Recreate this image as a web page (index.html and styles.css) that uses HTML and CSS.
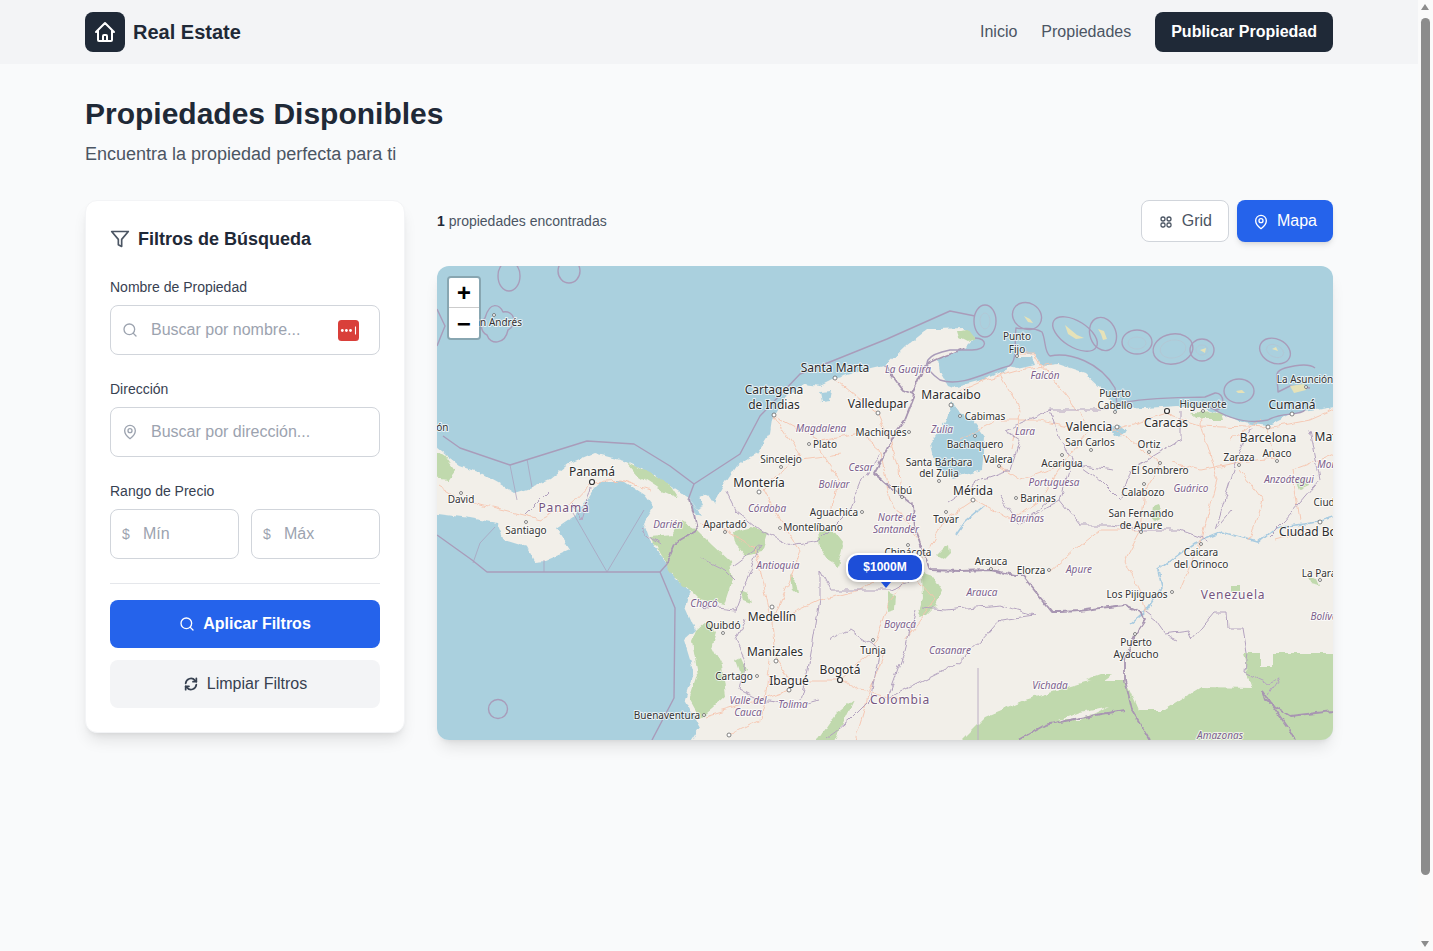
FILE: index.html
```html
<!DOCTYPE html>
<html lang="es">
<head>
<meta charset="utf-8">
<title>Real Estate</title>
<link rel="stylesheet" href="styles.css">
</head>
<body>
<header class="topbar">
  <div class="container topbar-inner">
    <a class="brand" href="#">
      <span class="brand-mark">
        <svg viewBox="0 0 24 24" class="icon-24"><path d="M3 12l2-2m0 0l7-7 7 7M5 10v10a1 1 0 0 0 1 1h3m10-11l2 2m-2-2v10a1 1 0 0 1-1 1h-3m-6 0a1 1 0 0 0 1-1v-4a1 1 0 0 1 1-1h2a1 1 0 0 1 1 1v4a1 1 0 0 0 1 1m-6 0h6"/></svg>
      </span>
      <span class="brand-name">Real Estate</span>
    </a>
    <nav class="nav">
      <a href="#">Inicio</a>
      <a href="#">Propiedades</a>
      <a href="#" class="publish">Publicar Propiedad</a>
    </nav>
  </div>
</header>

<main class="container main">
  <h1>Propiedades Disponibles</h1>
  <p class="lead">Encuentra la propiedad perfecta para ti</p>

  <div class="layout">
    <aside class="filters">
      <h2><svg viewBox="0 0 24 24" class="icon-20"><path d="M22 3H2l8 9.460V19l4 2v-8.540z"/></svg>Filtros de Búsqueda</h2>

      <label class="field-label">Nombre de Propiedad</label>
      <div class="input-wrap">
        <svg viewBox="0 0 24 24" class="input-icon"><circle cx="11" cy="11" r="8"/><path d="m21 21-4.350-4.350"/></svg>
        <input type="text" placeholder="Buscar por nombre...">
        <svg viewBox="0 0 21 21" class="pass-icon"><rect width="21" height="21" rx="3.500" fill="#d93f3a"/><circle cx="4.300" cy="10.500" r="1.400" fill="#fff"/><circle cx="8.400" cy="10.500" r="1.400" fill="#fff"/><circle cx="12.500" cy="10.500" r="1.400" fill="#fff"/><path d="M17.500 6.500v8" stroke="#fff" stroke-width="1.100" fill="none"/></svg>
      </div>

      <label class="field-label">Dirección</label>
      <div class="input-wrap">
        <svg viewBox="0 0 24 24" class="input-icon"><path d="M20 10c0 6-8 12-8 12s-8-6-8-12a8 8 0 0 1 16 0z"/><circle cx="12" cy="10" r="3"/></svg>
        <input type="text" placeholder="Buscar por dirección...">
      </div>

      <label class="field-label">Rango de Precio</label>
      <div class="price-row">
        <div class="input-wrap price"><span class="currency">$</span><input type="text" placeholder="Mín"></div>
        <div class="input-wrap price"><span class="currency">$</span><input type="text" placeholder="Máx"></div>
      </div>

      <div class="actions">
        <button class="btn-apply" type="button"><svg viewBox="0 0 24 24" class="icon-16"><circle cx="11" cy="11" r="8"/><path d="m21 21-4.350-4.350"/></svg>Aplicar Filtros</button>
        <button class="btn-clear" type="button"><svg viewBox="0 0 24 24" class="icon-16 thick"><path d="M4 11a8 8 0 0 1 14-4.500L20 8.500"/><path d="M20 3.500v5h-5"/><path d="M20 13a8 8 0 0 1-14 4.500L4 15.500"/><path d="M4 20.500v-5h5"/></svg>Limpiar Filtros</button>
      </div>
    </aside>

    <section class="results">
      <div class="results-head">
        <p class="count"><strong>1</strong> propiedades encontradas</p>
        <div class="views">
          <button class="view-btn" type="button"><svg viewBox="0 0 16 16" class="icon-grid"><circle cx="5" cy="5" r="2"/><circle cx="11" cy="5" r="2"/><rect x="3" y="9" width="4" height="4" rx="1.400"/><rect x="9" y="9" width="4" height="4" rx="1.400"/></svg>Grid</button>
          <button class="view-btn active" type="button"><svg viewBox="0 0 24 24" class="icon-16 pin"><path d="M20 10c0 6-8 12-8 12s-8-6-8-12a8 8 0 0 1 16 0z"/><circle cx="12" cy="10" r="3"/></svg>Mapa</button>
        </div>
      </div>

      <div class="map">
        <svg class="map-canvas" viewBox="437 266 896 474" width="896" height="474">
          <defs>
            <filter id="wobble" x="-5%" y="-5%" width="110%" height="110%">
              <feTurbulence type="fractalNoise" baseFrequency=".09" numOctaves="2" seed="4"/>
              <feDisplacementMap in="SourceGraphic" scale="7" xChannelSelector="R" yChannelSelector="G"/>
            </filter>
            <filter id="wobble-soft" x="-5%" y="-5%" width="110%" height="110%">
              <feTurbulence type="fractalNoise" baseFrequency=".14" numOctaves="2" seed="9"/>
              <feDisplacementMap in="SourceGraphic" scale="5" xChannelSelector="R" yChannelSelector="G"/>
            </filter>
          </defs>
          <rect class="water" x="437" y="266" width="896" height="474"/>

          <!-- land -->
          <g class="wobble-soft">
          <path class="land" d="M430 442 L447 456 L460 466 L480 473 L500 484 L514 493 L527 489 L550 479 L570 463 L594 453 L624 461 L650 473 L670 486 L690 499 L697 509 L704 506 L700 497 L708 494 L714 503 L722 488 L737 466 L748 458 L757 453 L770 433 L772 420 L774 416 L784 399 L804 384 L820 386 L834 379 L854 373 L885 366 L905 347 L928 329 L940 329 L962 328 L975 338 L965 348 L938 359 L940 372 L948 386 L953 388 L985 379 L1008 369 L1017 359 L1017 354 L1035 354 L1042 366 L1058 364 L1085 373 L1102 389 L1115 409 L1145 408 L1178 406 L1205 409 L1245 423 L1268 426 L1292 414 L1340 406 L1340 750 L685 750 L700 727 L685 700 L694 673 L684 640 L695 630 L685 607 L690 590 L675 578 L667 563 L650 540 L644 523 L654 507 L645 495 L625 482 L600 482 L594 488 L587 500 L575 515 L556 528 L570 550 L545 561 L535 562 L527 547 L504 540 L497 523 L470 518 L430 513 Z"/>
          <path class="water-in" d="M1004 357 h28 l3 8 -18 4 -13 -3z"/>
          <path class="water-in" d="M952 402 L960 413 L972 420 L985 437 L982 470 L952 478 L935 465 L930 443 L945 422 Z"/>
          <path class="water-in" d="M1110 428 l10 -2 6 4 -3 5 -9 1z"/>
          <path class="water-in" d="M820 392 l12 -1 -2 10 -8 1z"/>
          <path class="water-in" d="M690 499 l8 12 4 6 -6 -2 -5 -8z"/>
          </g>

          <!-- forest -->
          <g class="forest">
            <path d="M430 446 L445 456 L455 470 L448 480 L430 478Z"/>
            <path d="M627 462 L650 473 L670 486 L678 498 L660 490 L640 477Z"/>
            <path d="M650 537 L672 535 L680 520 L697 530 L712 545 L730 562 L733 580 L725 605 L700 600 L690 590 L675 578 L660 555Z"/>
            <path d="M697 630 L706 622 L716 632 L712 645 L722 665 L726 695 L712 708 L700 718 L690 700 L698 675 L692 642Z"/>
            <path d="M733 532 L752 527 L768 533 L762 552 L745 556 L736 546Z"/>
            <path d="M818 530 L828 526 L843 545 L838 566 L828 560 L820 548Z"/>
            <path d="M922 574 L935 578 L943 590 L936 606 L926 616 L917 618 L923 598Z"/>
            <path d="M888 592 l8 4 -1 14 -7 2z"/>
            <path d="M952 750 L985 717 L1025 700 L1092 680 L1125 680 L1138 710 L1165 710 L1202 687 L1252 688 L1247 673 L1243 653 L1260 653 L1260 667 L1272 667 L1272 653 L1340 653 L1340 750Z"/>
            <path d="M958 331 L968 329 L975 338 L968 342 L960 338Z"/>
            <path d="M814 745 L835 715 L854 700 L842 725 L832 745Z"/>
            <path d="M1152 505 l6 -2 4 14 -7 4 -4 -8z"/>
            <path d="M735 660 l6 -3 5 12 -6 5z"/>
            <path d="M790 575 l6 6 2 13 -6 -5z"/>
            <path d="M740 590 l8 3 3 10 -8 -3z"/>
            <path d="M1190 412 L1222 413 L1224 420 L1200 420 Z"/>
            <path d="M1296 480 l9 -3 4 9 -9 4z"/>
            <path d="M1232 586 h8 v6 h-8z"/>
            <path d="M1308 577 l9 2 3 7 -9 -2z"/>
            <path d="M1085 680 l16 -6 12 0 -12 8z"/>
            <path d="M936 556 l7 -7 6 -4 1 9 -6 6z"/>
            <path d="M1060 720 l20 -8 30 -6 -30 14z" class="clear"/>
          </g>

          <!-- rivers -->
          <g class="river">
            <path d="M1145 612 L1162 587 L1158 570 L1175 557 L1195 543 L1222 532 L1258 542 L1275 528 L1318 522 L1340 515"/>
            <path d="M1145 612 L1130 625"/>
            <path d="M956 535 L965 522 L985 505"/>
          </g>

          <!-- roads -->
          <g class="road">
            <path d="M834 379 L860 400 L878 413 L892 445 L900 470 L902 496"/>
            <path d="M774 416 L790 440 L800 455 L781 470 L764 490 L780 520 L800 550 L790 580 L772 622"/>
            <path d="M774 416 L820 440 L860 433 L880 450 L890 500 L920 540"/>
            <path d="M951 395 L985 380 L1020 370 L1050 365"/>
            <path d="M1017 354 L1035 354 L1042 366 L1070 400 L1090 430 L1115 430 L1166 414"/>
            <path d="M1166 414 L1200 425 L1268 428 L1310 420 L1333 410"/>
            <path d="M1089 430 L1062 465 L1040 500 L1010 520 L975 500 L945 520 L930 548"/>
            <path d="M1115 430 L1146 452 L1160 465 L1145 490 L1141 530"/>
            <path d="M1268 430 L1275 458 L1240 462 L1200 470 L1172 462"/>
            <path d="M1141 530 L1125 560 L1140 590 L1145 612"/>
            <path d="M1200 420 L1218 480 L1200 543 L1180 590"/>
            <path d="M1050 572 L1075 550 L1100 530 L1141 530"/>
            <path d="M772 622 L775 658 L790 680 L840 680 L872 652 L890 600 L930 550"/>
            <path d="M772 622 L820 600 L860 590 L890 570"/>
            <path d="M840 680 L860 690 L900 700"/>
            <path d="M790 690 L760 700 L705 716"/>
            <path d="M770 660 L765 700 L760 720 L730 735"/>
            <path d="M725 530 L755 548 L772 620"/>
            <path d="M725 530 L700 525"/>
            <path d="M592 482 L570 505 L540 520 L500 510 L461 500 L437 485"/>
            <path d="M592 482 L620 480 L650 490"/>
            <path d="M1230 440 L1262 420"/>
            <path d="M1300 520 L1292 470 L1333 455"/>
            <path d="M1275 540 L1310 530"/>
            <path d="M885 650 L870 690 L855 740"/>
            <path d="M960 440 L1000 420 L1040 420 L1089 430"/>
            <path d="M999 466 L1020 480 L1062 465"/>
            <path d="M900 560 L935 600 L905 640"/>
            <path d="M1000 375 L1020 410 L1012 450"/>
            <path d="M1240 470 L1262 500 L1250 540"/>
            <path d="M820 450 L840 480 L830 515"/>
            <path d="M800 460 L840 455"/>
          </g>

          <!-- state borders -->
          <g class="state">
            <path d="M880 455 L862 480 L850 510 L820 540 L790 545 L760 530 L735 510 L725 490"/>
            <path d="M733 566 L760 545 L735 610 L700 606"/>
            <path d="M745 620 L735 640 L745 660 L740 690 L760 700 L800 705 L820 700"/>
            <path d="M820 570 L820 600 L815 630 L808 670 L800 700"/>
            <path d="M820 570 L830 590 L890 590 L915 580"/>
            <path d="M830 640 L850 630 L880 650 L870 700 L850 720 L825 740"/>
            <path d="M915 610 L905 650 L887 700 L905 690 L955 665 L982 640 L1000 620 L1034 615"/>
            <path d="M922 608 L945 610 L1000 605 L1034 615"/>
            <path d="M948 502 L980 480 L1010 470 L1020 440 L1005 430 L1050 410 L1110 410"/>
            <path d="M1050 410 L1060 440 L1075 465 L1115 470"/>
            <path d="M1060 500 L1072 460 L1100 480 L1120 500 L1130 470 L1180 440 L1180 412"/>
            <path d="M1025 520 L1060 500 L1080 525 L1110 525"/>
            <path d="M1000 495 L1020 525 L1055 495"/>
            <path d="M1110 525 L1141 530 L1180 530 L1208 540"/>
            <path d="M1232 510 L1215 530 L1240 450 L1250 430"/>
            <path d="M1310 430 L1320 480 L1285 520 L1270 535"/>
            <path d="M1145 612 L1155 620 L1165 634 L1188 631 L1192 640 L1215 612 L1227 612 L1228 628 L1243 628 L1247 653 L1245 672 L1268 683 L1280 678 L1268 697"/>
            <path d="M1168 635 L1178 640"/>
            <path d="M735 580 L725 570 L700 558"/>
            <path d="M660 545 L640 530"/>
            <path d="M590 488 L580 520 L572 505"/>
            <path d="M525 515 L540 500 L550 490"/>
          </g>
          <path class="line-straight" d="M978 668 L978 740"/>

          <!-- borders -->
          <g class="border">
            <path d="M690 500 L694 515 L697 530 L680 540 L674 545 L667 562"/>
            <path d="M885 366 L903 390 L915 395 L905 420 L895 433 L885 453 L874 473 L885 483 L900 495 L913 505 L915 530 L925 557 L930 570 L960 571 L990 570 L1015 575 L1022 575 L1052 612 L1060 612 L1080 611 L1100 608 L1125 605 L1140 612 L1145 620 L1135 635 L1125 660 L1125 680 L1132 710 L1150 740"/>
            <path d="M965 348 L938 359 L925 365 L912 393"/>
            <path d="M1018 740 L1045 725 L1090 716 L1125 710"/>
            <path d="M1262 691 L1265 700 L1290 716 L1333 711"/>
            <path d="M1262 691 L1290 730 L1295 740"/>
          </g>

          <!-- maritime -->
          <g class="maritime">
            <path d="M437 309 L445 326 L437 346"/>
            <path d="M443 436 L460 448 L510 465 L587 441 L634 444 L670 466 L694 484 L740 454 L760 416 L800 374 L887 339 L950 311 L975 316"/>
            <path d="M694 484 L688 500"/>
            <path class="thin" d="M510 465 L517 500"/>
            <path class="thin" d="M527 459 L532 487"/>
            <path d="M437 535 L472 560 L487 572 L660 572 L675 608 L674 698 L652 740"/>
            <path d="M660 572 L668 563"/>
            <path class="thin" d="M473 563 L480 543 L495 527"/>
            <path class="thin" d="M544 572 L544 560"/>
            <path class="thin" d="M607 572 L573 513"/>
            <path class="thin" d="M607 572 L644 510"/>
            <path d="M975 338 C988 338 988 350 972 350 L950 350 C930 354 915 362 940 380 C962 388 990 370 1009 366 C1018 362 1014 340 1016 328 C1024 330 1032 326 1042 332 C1046 340 1044 352 1050 356 C1070 352 1100 362 1115 388 L1117 404 C1150 396 1190 398 1205 397 L1215 393 C1225 392 1226 410 1215 410 L1208 406 C1230 420 1250 424 1268 420 C1280 412 1300 416 1305 410"/>
            <path d="M1310 388 L1290 386 L1278 392 C1278 378 1272 372 1285 368 C1300 364 1310 364 1315 368"/>
            <ellipse cx="985" cy="321" rx="11" ry="16"/>
            <ellipse cx="1027" cy="316" rx="15" ry="13" transform="rotate(30 1027 316)"/>
            <ellipse cx="1075" cy="334" rx="25" ry="13" transform="rotate(32 1075 334)"/>
            <ellipse cx="1103" cy="334" rx="13" ry="17" transform="rotate(-20 1103 334)"/>
            <ellipse cx="1137" cy="342" rx="15" ry="12"/>
            <ellipse cx="1173" cy="349" rx="20" ry="15" transform="rotate(-10 1173 349)"/>
            <ellipse cx="1202" cy="350" rx="12" ry="11"/>
            <ellipse cx="1275" cy="351" rx="16" ry="12" transform="rotate(25 1275 351)"/>
            <ellipse cx="1239" cy="391" rx="15" ry="12"/>
            <ellipse cx="509" cy="276" rx="11" ry="15"/>
            <ellipse cx="569" cy="271" rx="11" ry="12"/>
            <path d="M485 318 C490 300 500 305 503 312 C515 310 518 325 508 330 C505 345 490 345 487 335 C480 332 480 322 485 318Z"/>
            <circle cx="498" cy="709" r="9.500"/>
          </g>
          <g class="reef">
            <ellipse cx="985" cy="321" rx="5" ry="8"/>
            <ellipse cx="1137" cy="343" rx="9" ry="6"/>
            <ellipse cx="1173" cy="349" rx="13" ry="9" transform="rotate(-10 1173 349)"/>
            <ellipse cx="1202" cy="350" rx="6" ry="5"/>
            <ellipse cx="1275" cy="351" rx="9" ry="6" transform="rotate(25 1275 351)"/>
          </g>

          <!-- islands -->
          <g class="island">
            <path d="M1024 316 l6 3 3 4 -5 -1z"/>
            <path d="M1065 325 l6 5 6 5 7 3 -8 1 -8 -5z"/>
            <path d="M1098 329 l6 2 3 8 -4 1 -2 -6z"/>
            <path d="M1200 350 l6 -2 -1 5z"/>
            <path d="M1236 391 l6 -1 3 3 -7 0z"/>
            <path d="M1272 349 l4 -2 2 4z"/>
            <path d="M1290 386 l14 -2 2 6 -12 3z"/>
          </g>

          <!-- country -->
          <g class="lbl-country">
            <text x="564" y="512">Panamá</text>
            <text x="900" y="704">Colombia</text>
            <text x="1233" y="599">Venezuela</text>
          </g>

          <!-- states -->
          <g class="lbl-state">
            <text x="908" y="373">La Guajira</text><text x="1045" y="379">Falcón</text>
            <text x="821" y="432">Magdalena</text><text x="942" y="433">Zulia</text>
            <text x="1025" y="435">Lara</text><text x="861" y="471">Cesar</text>
            <text x="834" y="488">Bolívar</text><text x="1054" y="486">Portuguesa</text>
            <text x="1191" y="492">Guárico</text><text x="1289" y="483">Anzoátegui</text>
            <text x="1338" y="468">Monagas</text><text x="767" y="512">Córdoba</text>
            <text x="668" y="528">Darién</text><text x="897" y="521">Norte de</text>
            <text x="896" y="533">Santander</text><text x="778" y="569">Antioquia</text>
            <text x="704" y="607">Chocó</text><text x="900" y="628">Boyacá</text>
            <text x="950" y="654">Casanare</text><text x="982" y="596">Arauca</text>
            <text x="1079" y="573">Apure</text><text x="1027" y="522">Barinas</text>
            <text x="1050" y="689">Vichada</text><text x="1220" y="739">Amazonas</text>
            <text x="748" y="704">Valle del</text><text x="748" y="716">Cauca</text>
            <text x="793" y="708">Tolima</text><text x="1326" y="620">Bolívar</text>
          </g>

          <!-- small cities -->
          <g class="lbl-small">
            <text x="469" y="326" class="start">San Andrés</text>
            <text x="437" y="431">León</text><text x="461" y="503">David</text>
            <text x="526" y="534">Santiago</text><text x="825" y="448">Plato</text>
            <text x="881" y="436">Machiques</text><text x="985" y="420">Cabimas</text>
            <text x="975" y="448">Bachaquero</text><text x="939" y="466">Santa Bárbara</text>
            <text x="939" y="477">del Zulia</text><text x="998" y="463">Valera</text>
            <text x="902" y="494">Tibú</text><text x="781" y="463">Sincelejo</text>
            <text x="1017" y="340">Punto</text><text x="1017" y="353">Fijo</text>
            <text x="1115" y="397">Puerto</text><text x="1115" y="409">Cabello</text>
            <text x="1203" y="408">Higuerote</text><text x="1305" y="383">La Asunción</text>
            <text x="1090" y="446">San Carlos</text><text x="1149" y="448">Ortiz</text>
            <text x="1062" y="467">Acarigua</text><text x="1160" y="474">El Sombrero</text>
            <text x="1143" y="496">Calabozo</text><text x="1239" y="461">Zaraza</text>
            <text x="1277" y="457">Anaco</text><text x="1038" y="502">Barinas</text>
            <text x="946" y="523">Tovar</text><text x="725" y="528">Apartadó</text>
            <text x="813" y="531">Montelíbano</text><text x="834" y="516">Aguachica</text>
            <text x="723" y="629">Quibdó</text><text x="734" y="680">Cartago</text>
            <text x="667" y="719">Buenaventura</text><text x="873" y="654">Tunja</text>
            <text x="991" y="565">Arauca</text><text x="1031" y="574">Elorza</text>
            <text x="1141" y="517">San Fernando</text><text x="1141" y="529">de Apure</text>
            <text x="1201" y="556">Caicara</text><text x="1201" y="568">del Orinoco</text>
            <text x="1137" y="598">Los Pijiguaos</text><text x="1136" y="646">Puerto</text>
            <text x="1136" y="658">Ayacucho</text><text x="1328" y="577">La Paragua</text>
            <text x="908" y="556">Chinácota</text><text x="1330" y="506">Ciudad</text>
          </g>

          <!-- large cities -->
          <g class="lbl-large">
            <text x="835" y="372">Santa Marta</text><text x="774" y="394">Cartagena</text>
            <text x="774" y="409">de Indias</text><text x="878" y="408">Valledupar</text>
            <text x="951" y="399">Maracaibo</text><text x="759" y="487">Montería</text>
            <text x="592" y="476">Panamá</text><text x="772" y="621">Medellín</text>
            <text x="775" y="656">Manizales</text><text x="789" y="685">Ibagué</text>
            <text x="840" y="674">Bogotá</text><text x="973" y="495">Mérida</text>
            <text x="1089" y="431">Valencia</text><text x="1166" y="427">Caracas</text>
            <text x="1268" y="442">Barcelona</text><text x="1292" y="409">Cumaná</text>
            <text x="1279" y="536" class="start">Ciudad Bolívar</text><text x="1337" y="441">Maturín</text>
          </g>

          <!-- city dots -->
          <g class="dot">
            <circle cx="494" cy="315" r="1.500"/><circle cx="461" cy="493" r="1.500"/>
            <circle cx="526" cy="522" r="1.500"/><circle cx="809" cy="444" r="1.500"/>
            <circle cx="835" cy="378" r="2"/><circle cx="774" cy="415" r="2"/>
            <circle cx="878" cy="413" r="2"/><circle cx="951" cy="405" r="2"/>
            <circle cx="909" cy="432" r="1.500"/><circle cx="960" cy="416" r="1.500"/>
            <circle cx="975" cy="436" r="1.500"/><circle cx="939" cy="481" r="1.500"/>
            <circle cx="999" cy="466" r="1.500"/><circle cx="902" cy="497" r="1.500"/>
            <circle cx="781" cy="467" r="1.500"/><circle cx="759" cy="492" r="2"/>
            <circle cx="1017" cy="356" r="1.500"/><circle cx="1115" cy="412" r="1.500"/>
            <circle cx="1203" cy="411" r="1.500"/><circle cx="1306" cy="387" r="1.500"/>
            <circle cx="1117" cy="427" r="2"/><circle cx="1091" cy="450" r="1.500"/>
            <circle cx="1149" cy="452" r="1.500"/><circle cx="1062" cy="455" r="1.500"/>
            <circle cx="1160" cy="463" r="1.500"/><circle cx="1144" cy="484" r="1.500"/>
            <circle cx="1239" cy="465" r="1.500"/><circle cx="1277" cy="461" r="1.500"/>
            <circle cx="1016" cy="498" r="1.500"/><circle cx="973" cy="500" r="2"/>
            <circle cx="946" cy="512" r="1.500"/><circle cx="725" cy="532" r="1.500"/>
            <circle cx="780" cy="528" r="1.500"/><circle cx="862" cy="512" r="1.500"/>
            <circle cx="723" cy="633" r="1.500"/><circle cx="757" cy="676" r="1.500"/>
            <circle cx="704" cy="715" r="1.500"/><circle cx="873" cy="640" r="1.500"/>
            <circle cx="991" cy="569" r="1.500"/><circle cx="1049" cy="570" r="1.500"/>
            <circle cx="1141" cy="532" r="1.500"/><circle cx="1201" cy="544" r="1.500"/>
            <circle cx="1172" cy="592" r="1.500"/><circle cx="1135" cy="634" r="1.500"/>
            <circle cx="1320" cy="580" r="1.500"/><circle cx="908" cy="545" r="1.500"/>
            <circle cx="772" cy="607" r="2"/><circle cx="776" cy="661" r="2"/>
            <circle cx="789" cy="690" r="2"/><circle cx="729" cy="735" r="2"/>
            <circle cx="1268" cy="427" r="2"/><circle cx="1292" cy="414" r="2"/>
            <circle cx="1320" cy="522" r="2"/>
          </g>
          <g class="capital">
            <circle cx="592" cy="482" r="2.500"/><circle cx="840" cy="680" r="2.500"/><circle cx="1167" cy="411" r="2.500"/>
          </g>
        </svg>

        <div class="zoom-ctrl">
          <button type="button">+</button>
          <button type="button">−</button>
        </div>

        <div class="price-pin">$1000M</div>
      </div>
    </section>
  </div>
</main>

<div class="fake-scrollbar" aria-hidden="true">
  <span class="sb-up"></span>
  <span class="sb-thumb"></span>
  <span class="sb-down"></span>
</div>
</body>
</html>
```

FILE: styles.css
```css
* { box-sizing: border-box; }
body {
  margin: 0;
  min-height: 1017px;
  padding-right: 15px;
  background: #f9fafb;
  color: #1f2937;
  font-family: "Liberation Sans", Arial, sans-serif;
  font-size: 16px;
}
a { color: inherit; text-decoration: none; }
button { font-family: inherit; cursor: pointer; }
svg { flex: none; }

.fake-scrollbar { position: fixed; top: 0; right: 0; bottom: 0; width: 15px; background: #fafafa; }
.sb-thumb { position: absolute; left: 3px; top: 18px; width: 9px; height: 857px; border-radius: 5px; background: #8c8c8c; }
.sb-up, .sb-down { position: absolute; left: 3px; width: 0; height: 0; border: 4.500px solid transparent; }
.sb-up { top: 4px; border-top: 0; border-bottom: 6px solid #8c8c8c; }
.sb-down { bottom: 4px; border-bottom: 0; border-top: 6px solid #8c8c8c; }

.container { width: 1280px; max-width: 100%; margin: 0 auto; padding: 0 16px; }
.topbar { height: 64px; background: #f3f4f6; }
.topbar-inner { height: 64px; display: flex; align-items: center; justify-content: space-between; }
.brand { display: flex; align-items: center; gap: 8px; }
.brand-mark { width: 40px; height: 40px; border-radius: 8px; background: #1f2937; display: flex; align-items: center; justify-content: center; }
.icon-24 { width: 24px; height: 24px; fill: none; stroke: #fff; stroke-width: 2; stroke-linecap: round; stroke-linejoin: round; }
.brand-name { font-size: 20px; font-weight: 700; color: #1f2937; }
.nav { display: flex; align-items: center; gap: 24px; color: #4b5563; }
.publish { height: 40px; padding: 0 16px; display: flex; align-items: center; border-radius: 8px; background: #1f2937; color: #fff; font-weight: 700; }

.main { padding-top: 32px; }
h1 { margin: 0; font-size: 30px; line-height: 36px; font-weight: 700; color: #1f2937; }
.lead { margin: 8px 0 32px; font-size: 18px; line-height: 28px; color: #4b5563; }
.layout { display: grid; grid-template-columns: 320px 896px; gap: 32px; align-items: start; }

.filters { background: #fff; border: 1px solid #f3f4f6; border-radius: 12px; padding: 24px; box-shadow: 0 10px 15px -3px rgba(0,0,0,.1), 0 4px 6px -4px rgba(0,0,0,.1); }
.filters h2 { margin: 0 0 24px; height: 28px; display: flex; align-items: center; gap: 8px; font-size: 18px; font-weight: 700; color: #1f2937; }
.icon-20 { width: 20px; height: 20px; fill: none; stroke: #4b5563; stroke-width: 2; stroke-linejoin: round; stroke-linecap: round; }
.field-label { display: block; margin-bottom: 8px; font-size: 14px; line-height: 20px; color: #374151; }
.input-wrap { position: relative; height: 50px; margin-bottom: 24px; }
.input-wrap input { width: 100%; height: 100%; padding: 0 16px 0 40px; border: 1px solid #d1d5db; border-radius: 8px; background: #fff; font: 16px "Liberation Sans", Arial, sans-serif; color: #1f2937; outline: none; }
.input-wrap input::placeholder { color: #9ca3af; opacity: 1; }
.input-wrap .input-icon { position: absolute; left: 12px; top: 17px; width: 16px; height: 16px; fill: none; stroke: #9ca3af; stroke-width: 2; stroke-linecap: round; stroke-linejoin: round; }
.pass-icon { position: absolute; right: 21px; top: 15px; width: 21px; height: 21px; }
.price-row { display: grid; grid-template-columns: 1fr 1fr; gap: 12px; }
.input-wrap.price { margin-bottom: 0; }
.input-wrap.price input { padding-left: 32px; }
.currency { position: absolute; left: 12px; top: 17px; font-size: 14px; line-height: 16px; color: #9ca3af; }
.actions { margin-top: 24px; padding-top: 16px; border-top: 1px solid #e5e7eb; display: flex; flex-direction: column; gap: 12px; }
.actions button { height: 48px; border: 0; border-radius: 8px; display: flex; align-items: center; justify-content: center; gap: 8px; font-size: 16px; }
.icon-16 { width: 16px; height: 16px; fill: none; stroke: currentColor; stroke-width: 2; stroke-linecap: round; stroke-linejoin: round; }
.btn-apply { background: #2563eb; color: #fff; font-weight: 700; }
.btn-clear { background: #f3f4f6; color: #374151; }
.btn-clear .thick { stroke-width: 2.600; }

.results-head { height: 42px; display: flex; align-items: center; justify-content: space-between; margin-bottom: 24px; }
.count { margin: 0; font-size: 14px; color: #4b5563; }
.count strong { color: #1f2937; }
.views { display: flex; gap: 8px; }
.view-btn { height: 42px; padding: 0 16px; display: flex; align-items: center; gap: 8px; border: 1px solid #d1d5db; border-radius: 8px; background: #fff; color: #4b5563; font-size: 16px; }
.view-btn.active { border: 0; background: #2563eb; color: #fff; box-shadow: 0 4px 6px -1px rgba(0,0,0,.1), 0 2px 4px -2px rgba(0,0,0,.1); }
.icon-grid { width: 16px; height: 16px; fill: none; stroke: currentColor; stroke-width: 1.300; position: relative; top: 1px; }
.pin { position: relative; top: 1px; }

.map { position: relative; width: 896px; height: 474px; overflow: hidden; border-radius: 12px; box-shadow: 0 10px 15px -3px rgba(0,0,0,.1), 0 4px 6px -4px rgba(0,0,0,.1); }
.map-canvas { display: block; width: 896px; height: 474px; font-family: "Noto Sans", "Open Sans", sans-serif; }
.water { fill: #aad0de; }
.water-in { fill: #aad0de; }
.land { fill: #f2efe9; }
.wobble-soft { filter: url(#wobble-soft); }
.forest { filter: url(#wobble); }
.forest path { fill: #c0d9ad; }
.forest path.clear { fill: #f2efe9; }
.river { filter: url(#wobble-soft); }
.river path { fill: none; stroke: #a8cbe0; stroke-width: 1.600; }
.road { filter: url(#wobble); }
.road path { fill: none; stroke: #f6c4ae; stroke-width: .9; }
.state { filter: url(#wobble); }
.state path { fill: none; stroke: #b3a2bf; stroke-width: 1; }
.border { filter: url(#wobble-soft); }
.border path { fill: none; stroke: #a896b2; stroke-width: 1.800; stroke-linejoin: round; }
.line-straight { fill: none; stroke: #bcaec4; stroke-width: 1; }
.maritime path, .maritime ellipse, .maritime circle { fill: none; stroke: #a99cba; stroke-width: 1.400; stroke-linejoin: round; }
.maritime path.thin { stroke-width: .7; }
.reef ellipse { fill: none; stroke: #b4c4d2; stroke-width: .7; }
.island path { fill: #e6e2b8; }
.lbl-country text, .lbl-state text, .lbl-small text, .lbl-large text { text-anchor: middle; paint-order: stroke; stroke: rgba(255,255,255,.72); stroke-width: 2px; stroke-linejoin: round; }
.lbl-country text { font-size: 12px; letter-spacing: .8px; fill: #75557f; }
.lbl-state text { font-size: 10px; font-style: italic; fill: #7c5f8c; }
.lbl-small text { font-size: 10px; fill: #333; }
.lbl-large text { font-size: 12px; fill: #2d2d2d; }
.lbl-small text.start, .lbl-large text.start { text-anchor: start; }
.dot circle { fill: #fff; stroke: #666; stroke-width: .8; }
.capital circle { fill: #fff; stroke: #333; stroke-width: 1.200; }

.zoom-ctrl { position: absolute; left: 10px; top: 10px; width: 34px; border: 2px solid rgba(0,0,0,.2); border-radius: 4px; background-clip: padding-box; }
.zoom-ctrl button { display: block; width: 30px; height: 30px; padding: 5px 0 0; border: 0; background: #fff; color: #000; font: 700 24px/24px "Lucida Console", "Liberation Mono", monospace; text-align: center; }
.zoom-ctrl button:first-child { border-bottom: 1px solid #ccc; border-radius: 2px 2px 0 0; }
.zoom-ctrl button:last-child { border-radius: 0 0 2px 2px; }

.price-pin { position: absolute; left: 409px; top: 287px; width: 78px; height: 29px; padding-bottom: 2px; display: flex; align-items: center; justify-content: center; border: 2px solid #fff; border-radius: 12px; background: #1d4ed8; color: #fff; font-size: 12px; font-weight: 700; box-shadow: 0 2px 6px rgba(0,0,0,.25); }
.price-pin::after { content: ""; position: absolute; left: 33px; top: 27px; border: 5px solid transparent; border-top: 6px solid #1d4ed8; border-bottom: 0; }
```
